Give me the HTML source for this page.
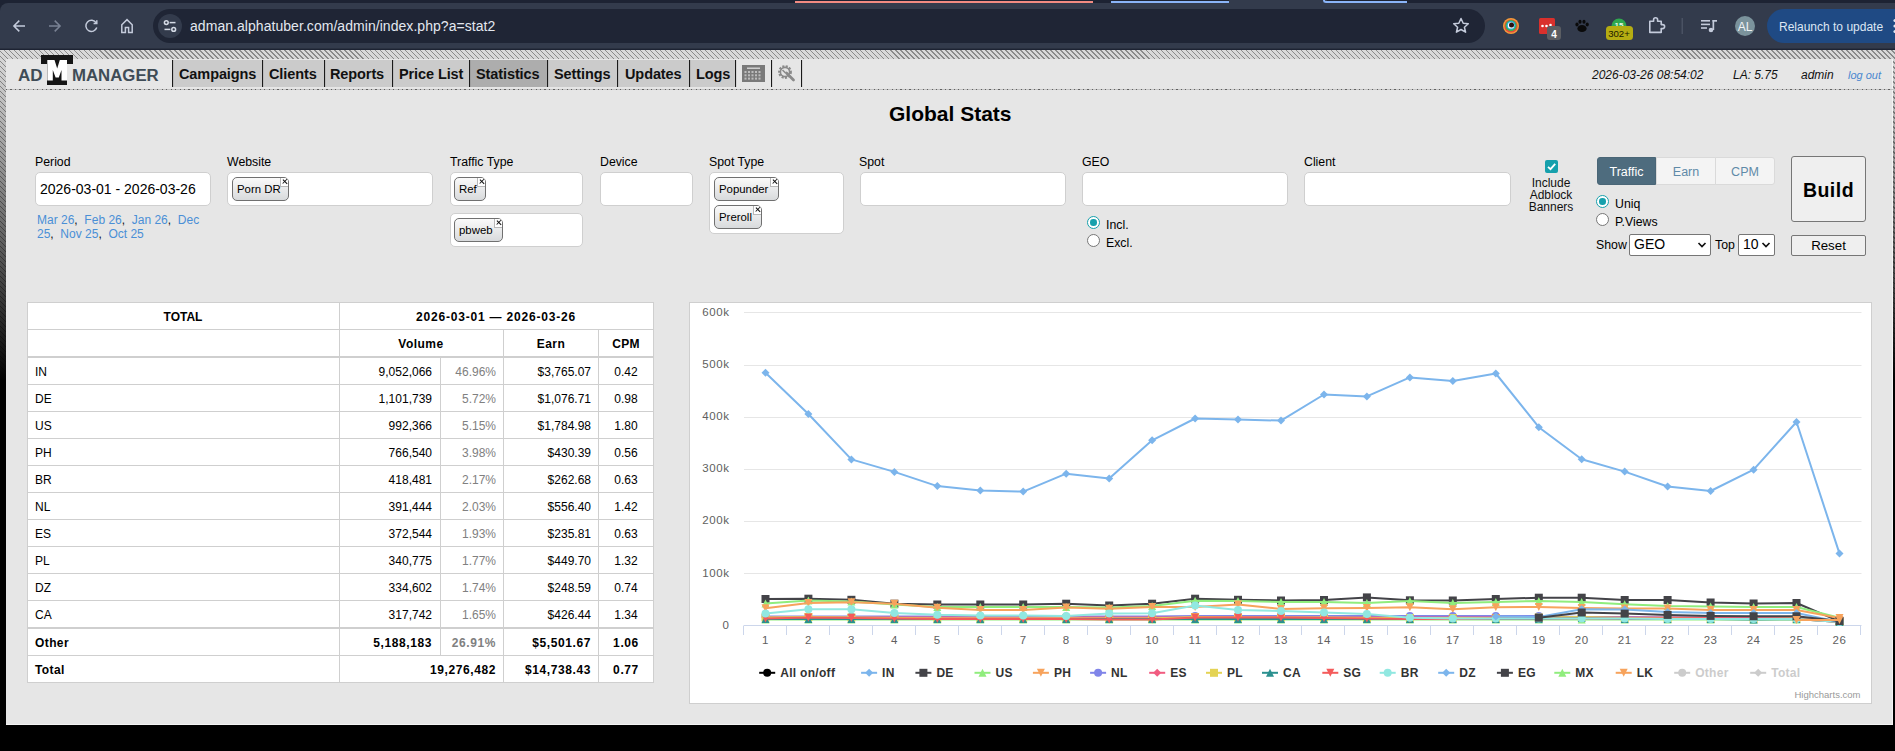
<!DOCTYPE html>
<html><head><meta charset="utf-8">
<style>
*{box-sizing:border-box;margin:0;padding:0}
html,body{width:1895px;height:751px;overflow:hidden;background:#000;font-family:"Liberation Sans",sans-serif;position:relative}
.a{position:absolute;white-space:nowrap}
/* chrome */
#chrome{position:absolute;left:0;top:0;width:1895px;height:50px;background:#1d2333}
#toolbar{position:absolute;left:0;top:3px;width:1895px;height:46px;background:#333b4c;border-radius:8px 0 0 0;border-bottom:1px solid #2a3140}
#omni{position:absolute;left:153px;top:9px;width:1332px;height:34px;border-radius:17px;background:#1f2535}
/* body bg */
#bg{position:absolute;left:0;top:50px;width:1895px;height:701px;
 background:
 repeating-linear-gradient(45deg, rgba(0,0,0,0) 0px, rgba(0,0,0,0) 2.6px, rgba(0,0,0,.36) 2.6px, rgba(0,0,0,.36) 3.54px),
 linear-gradient(#dadada 0px, #c0c0c0 50px, #606060 190px, #000 330px);}
#page{position:absolute;left:6px;top:59px;width:1887px;height:666px;background:#e6e6e6;border-bottom:1px solid #f4f4f4;border-right:1px solid #f4f4f4}
.menu{position:absolute;top:60px;height:27px;background:#cbcbcb}
.sep{position:absolute;top:60px;width:1px;height:27px;background:#1a1a1a;box-shadow:0.5px 0 0 rgba(30,30,30,.2)}
.mt{position:absolute;top:65.5px;font-size:14.5px;font-weight:bold;color:#111;letter-spacing:-0.1px;white-space:nowrap}
.lbl{position:absolute;font-size:12.3px;color:#000;white-space:nowrap}
.box{position:absolute;background:#fff;border:1px solid #cfcfcf;border-radius:5px}
.chip{position:absolute;height:24px;border:1px solid #707070;border-radius:5px;background:linear-gradient(#fafafa,#d8dadc);font-size:11.4px;color:#000;padding:5px 0 0 4px;white-space:nowrap}
.chip i{font-size:0;position:absolute;right:0px;top:0px;width:8.5px;height:8.5px;background:#fff;border-left:1px solid #b8b8b8;border-bottom:1px solid #b8b8b8;border-radius:0 4px 0 0}.chip i:before,.chip i:after{content:"";position:absolute;left:1.2px;top:3.2px;width:5.5px;height:1.4px;background:#111;transform:rotate(45deg)}.chip i:after{transform:rotate(-45deg)}
.radio{position:absolute;width:13px;height:13px;border-radius:50%;border:1px solid #777;background:#fff}
.radio.on{border:1.5px solid #16a0ac;background:#fff}
.radio.on:after{content:"";position:absolute;left:2px;top:2px;width:6.5px;height:6.5px;border-radius:50%;background:#16a0ac}
</style></head><body>
<div id="chrome">
 <div class="a" style="left:795px;top:0.5px;width:298px;height:2px;background:#f28b82"></div>
 <div class="a" style="left:1111px;top:0;width:122px;height:3px;border-bottom:2px solid #8ab4f8;border-right:2px solid #8ab4f8;border-radius:0 0 5px 0"></div>
 <div class="a" style="left:1229px;top:0;width:98px;height:3.5px;background:#333b4c"></div>
 <div class="a" style="left:1323px;top:0;width:84px;height:3px;border-bottom:2px solid #8ab4f8;border-left:2px solid #8ab4f8;border-radius:0 0 0 5px"></div>
 <div id="toolbar"></div>
 <div id="omni"></div>
 <svg class="a" style="left:0;top:0" width="1895" height="50" viewBox="0 0 1895 50">
  <g fill="none" stroke="#c4cbdb" stroke-width="1.5" stroke-linecap="butt">
   <path d="M25 26 H14.2 M19.3 20.6 L13.9 26 L19.3 31.4"/>
  </g>
  <g fill="none" stroke="#7a8294" stroke-width="1.5">
   <path d="M49 26 H59.8 M54.7 20.6 L60.1 26 L54.7 31.4"/>
  </g>
  <g fill="none" stroke="#c4cbdb" stroke-width="1.5">
   <path d="M96.2 22.8 A5.6 5.6 0 1 0 96.8 27.6"/>
   <path d="M96.8 20.2 V23.4 H93.6"/>
   <path d="M121.8 32.6 V24.8 L127 19.6 L132.2 24.8 V32.6 H128.6 V27.6 H125.4 V32.6 Z" stroke-linejoin="miter"/>
  </g>
  <circle cx="170" cy="26" r="12" fill="#333b4c"/>
  <g fill="none" stroke="#d5dbe6" stroke-width="1.5">
   <circle cx="166.3" cy="22.6" r="1.9"/><path d="M169.6 22.6 H175.5"/>
   <circle cx="173.7" cy="29.4" r="1.9"/><path d="M164.5 29.4 H170.4"/>
  </g>
  <path d="M1461 18.5 L1463.2 23.3 L1468.3 23.8 L1464.4 27.2 L1465.6 32.2 L1461 29.5 L1456.4 32.2 L1457.6 27.2 L1453.7 23.8 L1458.8 23.3 Z" fill="none" stroke="#c4cbdb" stroke-width="1.5" stroke-linejoin="round"/>
  <!-- ext 1 colorful eye -->
  <circle cx="1511" cy="26" r="8" fill="#f39c3a"/>
  <circle cx="1511" cy="26" r="6.6" fill="#e8473a"/>
  <circle cx="1511" cy="25.6" r="5.6" fill="#3eb24c"/>
  <circle cx="1511" cy="25.4" r="4.4" fill="#29a8e0"/>
  <circle cx="1511" cy="25.4" r="3.2" fill="#fff"/>
  <circle cx="1511.5" cy="25" r="2.5" fill="#2a1210"/>
  <!-- ext 2 red -->
  <rect x="1539" y="18" width="16" height="16" rx="1.5" fill="#d9302c"/>
  <circle cx="1542.5" cy="26" r="1.3" fill="#fff"/><circle cx="1546.5" cy="26" r="1.3" fill="#fff"/><circle cx="1550.5" cy="25" r="1.3" fill="#fff"/>
  <rect x="1547" y="26" width="14" height="14" rx="3" fill="#5b5e63"/>
  <text x="1554" y="37.5" font-family="Liberation Sans" font-size="10" font-weight="bold" fill="#fff" text-anchor="middle">4</text>
  <!-- paw -->
  <g fill="#0a0a0a">
   <ellipse cx="1582" cy="28.5" rx="4.6" ry="3.6"/>
   <ellipse cx="1577" cy="24.5" rx="1.6" ry="2"/><ellipse cx="1580" cy="21.8" rx="1.6" ry="2"/>
   <ellipse cx="1584" cy="21.8" rx="1.6" ry="2"/><ellipse cx="1587.2" cy="24.5" rx="1.6" ry="2"/>
  </g>
  <!-- ext green with 302+ -->
  <circle cx="1619" cy="26" r="7.5" fill="#2fa84f"/><text x="1619" y="28" font-family="Liberation Sans" font-size="8" font-weight="bold" fill="#e8f5e8" text-anchor="middle">15</text>
  <rect x="1606" y="26" width="27" height="14" rx="3.5" fill="#b5ad12"/>
  <text x="1619" y="37" font-family="Liberation Sans" font-size="9.6" fill="#1a1a00" text-anchor="middle">302+</text>
  <!-- puzzle -->
  <path d="M1649.8 21.2 H1653.6 V19.8 A2 2 0 0 1 1657.6 19.8 V21.2 H1661.2 V24.6 H1662.6 A2 2 0 0 1 1662.6 28.6 H1661.2 V32.4 H1649.8 Z" fill="none" stroke="#c4cbdb" stroke-width="1.6" stroke-linejoin="round"/>
  <rect x="1681.5" y="18" width="1.5" height="16" fill="#4a5263"/>
  <!-- media -->
  <g fill="#c4cbdb">
   <rect x="1701" y="20" width="9" height="1.6"/><rect x="1701" y="23.6" width="9" height="1.6"/><rect x="1701" y="27.2" width="6" height="1.6"/>
   <rect x="1712.5" y="20" width="1.7" height="10"/><rect x="1712.5" y="20" width="4.5" height="1.7"/>
   <circle cx="1711" cy="30" r="2.3"/>
  </g>
  <circle cx="1745" cy="26" r="10" fill="#7b939c"/>
  <text x="1745" y="30.5" font-family="Liberation Sans" font-size="12" fill="#f0f4f6" text-anchor="middle">AL</text>
  <rect x="1767" y="9" width="160" height="34" rx="17" fill="#1f4a84"/>
  <text x="1779" y="30.5" font-family="Liberation Sans" font-size="12" fill="#dde6f3">Relaunch to update</text>
  <circle cx="1895" cy="20.5" r="1.6" fill="#dde6f3"/><circle cx="1895" cy="26" r="1.6" fill="#dde6f3"/><circle cx="1895" cy="31.5" r="1.6" fill="#dde6f3"/>
 </svg>
 <div class="a" style="left:190px;top:18px;font-size:14px;color:#e3e8f0;letter-spacing:0.05px">adman.alphatuber.com/admin/index.php?a=stat2</div>
</div>
<div id="bg"></div>
<div id="page"></div>
<!-- logo -->
<div class="a" style="left:18px;top:66px;font-size:17px;font-weight:bold;color:#3f4c56">AD</div>
<div class="a" style="left:41px;top:55px;width:32px;height:9px;background:#151515"></div>
<div class="a" style="left:47px;top:55px;width:20px;height:30px;background:#151515"></div>
<svg class="a" style="left:41px;top:55px" width="32" height="30" viewBox="0 0 32 30"><path d="M6.3 25.5 V5 H13.5 L16.2 13.5 L18.8 5 H26 V25.5 H20.5 V15 L17.8 22.5 H14.6 L11.8 15 V25.5 Z" fill="#fff"/></svg>
<div class="a" style="left:72px;top:66px;font-size:16.8px;font-weight:bold;color:#3f4c56">MANAGER</div>
<!-- menu -->
<div class="menu" style="left:173px;width:563px"></div>
<div class="menu" style="left:470px;width:78px;background:#adadad"></div>
<div class="sep" style="left:172px"></div>
<div class="sep" style="left:262px"></div>
<div class="sep" style="left:324px"></div>
<div class="sep" style="left:392px"></div>
<div class="sep" style="left:469px"></div>
<div class="sep" style="left:547px"></div>
<div class="sep" style="left:617px"></div>
<div class="sep" style="left:689px"></div>
<div class="sep" style="left:735px"></div>
<div class="sep" style="left:771px"></div>
<div class="sep" style="left:801px"></div>
<div class="mt" style="left:179px">Campaigns</div>
<div class="mt" style="left:269px">Clients</div>
<div class="mt" style="left:330px">Reports</div>
<div class="mt" style="left:399px">Price List</div>
<div class="mt" style="left:476px">Statistics</div>
<div class="mt" style="left:554px">Settings</div>
<div class="mt" style="left:625px">Updates</div>
<div class="mt" style="left:696px">Logs</div>
<svg class="a" style="left:742px;top:65px" width="23" height="17" viewBox="0 0 23 17">
 <rect x="0" y="0" width="23" height="17" fill="#7a7a7a"/>
 <rect x="5" y="2.5" width="13" height="1.5" fill="#cfcfcf"/>
 <g fill="#bdbdbd">
  <rect x="2.5" y="6" width="2" height="2"/><rect x="6" y="6" width="2" height="2"/><rect x="9.5" y="6" width="2" height="2"/><rect x="13" y="6" width="2" height="2"/><rect x="16.5" y="6" width="2" height="2"/>
  <rect x="2.5" y="9.3" width="2" height="2"/><rect x="6" y="9.3" width="2" height="2"/><rect x="9.5" y="9.3" width="2" height="2"/><rect x="13" y="9.3" width="2" height="2"/><rect x="16.5" y="9.3" width="2" height="2"/>
  <rect x="2.5" y="12.6" width="2" height="2"/><rect x="6" y="12.6" width="2" height="2"/><rect x="9.5" y="12.6" width="2" height="2"/><rect x="13" y="12.6" width="2" height="2"/><rect x="16.5" y="12.6" width="2" height="2"/>
 </g>
</svg>
<svg class="a" style="left:777px;top:64px" width="20" height="19" viewBox="0 0 20 19">
 <circle cx="8" cy="8" r="5.6" fill="none" stroke="#8a8a8a" stroke-width="2.6" stroke-dasharray="2 1.3"/>
 <circle cx="8" cy="8" r="4.6" fill="none" stroke="#8a8a8a" stroke-width="1.6"/>
 <path d="M9.5 9 L16.5 16" stroke="#8a8a8a" stroke-width="2.8" stroke-linecap="round"/>
 <path d="M5.5 6 L8.5 9" stroke="#8a8a8a" stroke-width="1.6"/>
</svg>
<div class="a" style="left:6px;top:89px;width:1887px;height:1px;background:repeating-linear-gradient(90deg,#606060 0,#606060 1.2px,#c2c2c2 1.2px,#c2c2c2 4.45px)"></div>
<div class="a" style="left:1592px;top:68px;font-size:12px;font-style:italic;color:#111">2026-03-26 08:54:02</div>
<div class="a" style="left:1733px;top:68px;font-size:12px;font-style:italic;color:#111">LA: 5.75</div>
<div class="a" style="left:1801px;top:68px;font-size:12px;font-style:italic;color:#111">admin</div>
<div class="a" style="left:1848px;top:69px;font-size:11px;font-style:italic;color:#4a87cf">log out</div>
<!-- title -->
<div class="a" style="left:889px;top:102px;font-size:21px;font-weight:bold;color:#000">Global Stats</div>
<!-- form -->
<div class="lbl" style="left:35px;top:155px">Period</div>
<div class="box" style="left:35px;top:172px;width:176px;height:34px"></div>
<div class="a" style="left:40px;top:181px;font-size:14px;color:#000">2026-03-01 - 2026-03-26</div>
<div class="a" style="left:37px;top:213px;font-size:12px;line-height:14px;color:#4a8fd6">Mar 26<span style="color:#111">,</span>&nbsp;&nbsp;Feb 26<span style="color:#111">,</span>&nbsp;&nbsp;Jan 26<span style="color:#111">,</span>&nbsp;&nbsp;Dec<br>25<span style="color:#111">,</span>&nbsp;&nbsp;Nov 25<span style="color:#111">,</span>&nbsp;&nbsp;Oct 25</div>

<div class="lbl" style="left:227px;top:155px">Website</div>
<div class="box" style="left:227px;top:172px;width:206px;height:34px"></div>
<div class="chip" style="left:232px;top:177px;width:57px">Porn DR<i>x</i></div>

<div class="lbl" style="left:450px;top:155px">Traffic Type</div>
<div class="box" style="left:450px;top:172px;width:133px;height:34px"></div>
<div class="chip" style="left:454px;top:177px;width:32px">Ref<i>x</i></div>
<div class="box" style="left:450px;top:213px;width:133px;height:34px"></div>
<div class="chip" style="left:454px;top:218px;width:49px">pbweb<i>x</i></div>

<div class="lbl" style="left:600px;top:155px">Device</div>
<div class="box" style="left:600px;top:172px;width:93px;height:34px"></div>

<div class="lbl" style="left:709px;top:155px">Spot Type</div>
<div class="box" style="left:709px;top:172px;width:135px;height:62px"></div>
<div class="chip" style="left:714px;top:177px;width:65px">Popunder<i>x</i></div>
<div class="chip" style="left:714px;top:205px;width:48px">Preroll<i>x</i></div>

<div class="lbl" style="left:859px;top:155px">Spot</div>
<div class="box" style="left:860px;top:172px;width:206px;height:34px"></div>

<div class="lbl" style="left:1082px;top:155px">GEO</div>
<div class="box" style="left:1082px;top:172px;width:206px;height:34px"></div>
<div class="radio on" style="left:1087px;top:216px"></div>
<div class="lbl" style="left:1106px;top:218px">Incl.</div>
<div class="radio" style="left:1087px;top:234px"></div>
<div class="lbl" style="left:1106px;top:236px">Excl.</div>

<div class="lbl" style="left:1304px;top:155px">Client</div>
<div class="box" style="left:1304px;top:172px;width:207px;height:34px"></div>

<div class="a" style="left:1545px;top:160px;width:13px;height:13px;border-radius:2px;background:#16a0ac"></div>
<svg class="a" style="left:1545px;top:160px" width="13" height="13" viewBox="0 0 13 13"><path d="M3 6.8 L5.5 9.2 L10.2 3.8" fill="none" stroke="#fff" stroke-width="1.8"/></svg>
<div class="a" style="left:1518px;top:177px;width:66px;text-align:center;font-size:12px;line-height:12px;color:#111">Include<br>Adblock<br>Banners</div>

<div class="a" style="left:1597px;top:157px;width:59px;height:28px;background:#4e6c7e;border:1px solid #4a6677;border-radius:3px 0 0 3px;color:#fff;font-size:12.5px;text-align:center;line-height:28.5px">Traffic</div>
<div class="a" style="left:1656px;top:157px;width:60px;height:28px;background:#f4f4f4;border:1px solid #dadada;color:#5f8aa8;font-size:12.5px;text-align:center;line-height:28.5px">Earn</div>
<div class="a" style="left:1715px;top:157px;width:60px;height:28px;background:#f4f4f4;border:1px solid #dadada;border-radius:0 3px 3px 0;color:#5f8aa8;font-size:12.5px;text-align:center;line-height:28.5px">CPM</div>

<div class="radio on" style="left:1596px;top:195px"></div>
<div class="lbl" style="left:1615px;top:197px">Uniq</div>
<div class="radio" style="left:1596px;top:213px"></div>
<div class="lbl" style="left:1615px;top:215px">P.Views</div>

<div class="lbl" style="left:1596px;top:238px">Show</div>
<div class="a" style="left:1629px;top:234px;width:82px;height:22px;background:#fff;border:1px solid #767676;border-radius:2px"></div>
<div class="a" style="left:1634px;top:236px;font-size:14px;color:#000">GEO</div>
<svg class="a" style="left:1697px;top:241px" width="10" height="8" viewBox="0 0 10 8"><path d="M1.5 2 L5 5.5 L8.5 2" fill="none" stroke="#111" stroke-width="1.7"/></svg>
<div class="lbl" style="left:1715px;top:238px">Top</div>
<div class="a" style="left:1738px;top:234px;width:37px;height:22px;background:#fff;border:1px solid #767676;border-radius:2px"></div>
<div class="a" style="left:1743px;top:236px;font-size:14px;color:#000">10</div>
<svg class="a" style="left:1761px;top:241px" width="10" height="8" viewBox="0 0 10 8"><path d="M1.5 2 L5 5.5 L8.5 2" fill="none" stroke="#111" stroke-width="1.7"/></svg>

<div class="a" style="left:1791px;top:156px;width:75px;height:66px;background:#efefef;border:1px solid #767676;border-radius:3px;font-size:19.5px;font-weight:bold;color:#000;text-align:center;line-height:66px;letter-spacing:0.5px">Build</div>
<div id="chart"><div class="a" style="left:689px;top:302px;width:1183px;height:402px;background:#fff;border:1px solid #cfcfcf"></div>
<svg class="a" style="left:0;top:0" width="1895" height="751" viewBox="0 0 1895 751">
<path d="M744.0 573.5 H1861.5" stroke="#e6e6e6" stroke-width="1"/>
<path d="M744.0 521.5 H1861.5" stroke="#e6e6e6" stroke-width="1"/>
<path d="M744.0 469.5 H1861.5" stroke="#e6e6e6" stroke-width="1"/>
<path d="M744.0 417.5 H1861.5" stroke="#e6e6e6" stroke-width="1"/>
<path d="M744.0 365.5 H1861.5" stroke="#e6e6e6" stroke-width="1"/>
<path d="M744.0 312.5 H1861.5" stroke="#e6e6e6" stroke-width="1"/>
<path d="M744.0 625.5 H1861.5" stroke="#ccd6eb" stroke-width="1"/>
<path d="M743.5 625.5 V635" stroke="#ccd6eb" stroke-width="1"/>
<path d="M786.5 625.5 V635" stroke="#ccd6eb" stroke-width="1"/>
<path d="M829.5 625.5 V635" stroke="#ccd6eb" stroke-width="1"/>
<path d="M872.5 625.5 V635" stroke="#ccd6eb" stroke-width="1"/>
<path d="M915.5 625.5 V635" stroke="#ccd6eb" stroke-width="1"/>
<path d="M958.5 625.5 V635" stroke="#ccd6eb" stroke-width="1"/>
<path d="M1001.5 625.5 V635" stroke="#ccd6eb" stroke-width="1"/>
<path d="M1044.5 625.5 V635" stroke="#ccd6eb" stroke-width="1"/>
<path d="M1087.5 625.5 V635" stroke="#ccd6eb" stroke-width="1"/>
<path d="M1130.5 625.5 V635" stroke="#ccd6eb" stroke-width="1"/>
<path d="M1173.5 625.5 V635" stroke="#ccd6eb" stroke-width="1"/>
<path d="M1216.5 625.5 V635" stroke="#ccd6eb" stroke-width="1"/>
<path d="M1259.5 625.5 V635" stroke="#ccd6eb" stroke-width="1"/>
<path d="M1301.5 625.5 V635" stroke="#ccd6eb" stroke-width="1"/>
<path d="M1344.5 625.5 V635" stroke="#ccd6eb" stroke-width="1"/>
<path d="M1387.5 625.5 V635" stroke="#ccd6eb" stroke-width="1"/>
<path d="M1430.5 625.5 V635" stroke="#ccd6eb" stroke-width="1"/>
<path d="M1473.5 625.5 V635" stroke="#ccd6eb" stroke-width="1"/>
<path d="M1516.5 625.5 V635" stroke="#ccd6eb" stroke-width="1"/>
<path d="M1559.5 625.5 V635" stroke="#ccd6eb" stroke-width="1"/>
<path d="M1602.5 625.5 V635" stroke="#ccd6eb" stroke-width="1"/>
<path d="M1645.5 625.5 V635" stroke="#ccd6eb" stroke-width="1"/>
<path d="M1688.5 625.5 V635" stroke="#ccd6eb" stroke-width="1"/>
<path d="M1731.5 625.5 V635" stroke="#ccd6eb" stroke-width="1"/>
<path d="M1774.5 625.5 V635" stroke="#ccd6eb" stroke-width="1"/>
<path d="M1817.5 625.5 V635" stroke="#ccd6eb" stroke-width="1"/>
<path d="M1860.5 625.5 V635" stroke="#ccd6eb" stroke-width="1"/>
<text x="729.5" y="628.7" text-anchor="end" font-family="Liberation Sans" font-size="11.5" fill="#606060" letter-spacing="0.6">0</text>
<text x="729.5" y="576.5" text-anchor="end" font-family="Liberation Sans" font-size="11.5" fill="#606060" letter-spacing="0.6">100k</text>
<text x="729.5" y="524.4" text-anchor="end" font-family="Liberation Sans" font-size="11.5" fill="#606060" letter-spacing="0.6">200k</text>
<text x="729.5" y="472.2" text-anchor="end" font-family="Liberation Sans" font-size="11.5" fill="#606060" letter-spacing="0.6">300k</text>
<text x="729.5" y="420.0" text-anchor="end" font-family="Liberation Sans" font-size="11.5" fill="#606060" letter-spacing="0.6">400k</text>
<text x="729.5" y="367.8" text-anchor="end" font-family="Liberation Sans" font-size="11.5" fill="#606060" letter-spacing="0.6">500k</text>
<text x="729.5" y="315.7" text-anchor="end" font-family="Liberation Sans" font-size="11.5" fill="#606060" letter-spacing="0.6">600k</text>
<text x="765.5" y="644" text-anchor="middle" font-family="Liberation Sans" font-size="11.5" fill="#606060" letter-spacing="0.5">1</text>
<text x="808.4" y="644" text-anchor="middle" font-family="Liberation Sans" font-size="11.5" fill="#606060" letter-spacing="0.5">2</text>
<text x="851.4" y="644" text-anchor="middle" font-family="Liberation Sans" font-size="11.5" fill="#606060" letter-spacing="0.5">3</text>
<text x="894.4" y="644" text-anchor="middle" font-family="Liberation Sans" font-size="11.5" fill="#606060" letter-spacing="0.5">4</text>
<text x="937.3" y="644" text-anchor="middle" font-family="Liberation Sans" font-size="11.5" fill="#606060" letter-spacing="0.5">5</text>
<text x="980.3" y="644" text-anchor="middle" font-family="Liberation Sans" font-size="11.5" fill="#606060" letter-spacing="0.5">6</text>
<text x="1023.2" y="644" text-anchor="middle" font-family="Liberation Sans" font-size="11.5" fill="#606060" letter-spacing="0.5">7</text>
<text x="1066.2" y="644" text-anchor="middle" font-family="Liberation Sans" font-size="11.5" fill="#606060" letter-spacing="0.5">8</text>
<text x="1109.2" y="644" text-anchor="middle" font-family="Liberation Sans" font-size="11.5" fill="#606060" letter-spacing="0.5">9</text>
<text x="1152.1" y="644" text-anchor="middle" font-family="Liberation Sans" font-size="11.5" fill="#606060" letter-spacing="0.5">10</text>
<text x="1195.1" y="644" text-anchor="middle" font-family="Liberation Sans" font-size="11.5" fill="#606060" letter-spacing="0.5">11</text>
<text x="1238.0" y="644" text-anchor="middle" font-family="Liberation Sans" font-size="11.5" fill="#606060" letter-spacing="0.5">12</text>
<text x="1281.0" y="644" text-anchor="middle" font-family="Liberation Sans" font-size="11.5" fill="#606060" letter-spacing="0.5">13</text>
<text x="1324.0" y="644" text-anchor="middle" font-family="Liberation Sans" font-size="11.5" fill="#606060" letter-spacing="0.5">14</text>
<text x="1366.9" y="644" text-anchor="middle" font-family="Liberation Sans" font-size="11.5" fill="#606060" letter-spacing="0.5">15</text>
<text x="1409.9" y="644" text-anchor="middle" font-family="Liberation Sans" font-size="11.5" fill="#606060" letter-spacing="0.5">16</text>
<text x="1452.8" y="644" text-anchor="middle" font-family="Liberation Sans" font-size="11.5" fill="#606060" letter-spacing="0.5">17</text>
<text x="1495.8" y="644" text-anchor="middle" font-family="Liberation Sans" font-size="11.5" fill="#606060" letter-spacing="0.5">18</text>
<text x="1538.8" y="644" text-anchor="middle" font-family="Liberation Sans" font-size="11.5" fill="#606060" letter-spacing="0.5">19</text>
<text x="1581.7" y="644" text-anchor="middle" font-family="Liberation Sans" font-size="11.5" fill="#606060" letter-spacing="0.5">20</text>
<text x="1624.7" y="644" text-anchor="middle" font-family="Liberation Sans" font-size="11.5" fill="#606060" letter-spacing="0.5">21</text>
<text x="1667.6" y="644" text-anchor="middle" font-family="Liberation Sans" font-size="11.5" fill="#606060" letter-spacing="0.5">22</text>
<text x="1710.6" y="644" text-anchor="middle" font-family="Liberation Sans" font-size="11.5" fill="#606060" letter-spacing="0.5">23</text>
<text x="1753.6" y="644" text-anchor="middle" font-family="Liberation Sans" font-size="11.5" fill="#606060" letter-spacing="0.5">24</text>
<text x="1796.5" y="644" text-anchor="middle" font-family="Liberation Sans" font-size="11.5" fill="#606060" letter-spacing="0.5">25</text>
<text x="1839.5" y="644" text-anchor="middle" font-family="Liberation Sans" font-size="11.5" fill="#606060" letter-spacing="0.5">26</text>
<path d="M765.5 372.8 L808.4 414.0 L851.4 459.4 L894.4 471.9 L937.3 486.1 L980.3 490.5 L1023.2 491.6 L1066.2 473.7 L1109.2 478.4 L1152.1 440.3 L1195.1 418.5 L1238.0 419.6 L1281.0 420.6 L1324.0 394.5 L1366.9 396.4 L1409.9 377.4 L1452.8 380.9 L1495.8 373.5 L1538.8 427.2 L1581.7 459.3 L1624.7 471.6 L1667.6 486.5 L1710.6 491.0 L1753.6 469.7 L1796.5 422.0 L1839.5 553.6" fill="none" stroke="#7cb5ec" stroke-width="2" stroke-linejoin="round" stroke-linecap="round"/>
<path d="M765.5 368.8 L769.5 372.8 L765.5 376.8 L761.5 372.8 Z" fill="#7cb5ec"/>
<path d="M808.4 410.0 L812.4 414.0 L808.4 418.0 L804.4 414.0 Z" fill="#7cb5ec"/>
<path d="M851.4 455.4 L855.4 459.4 L851.4 463.4 L847.4 459.4 Z" fill="#7cb5ec"/>
<path d="M894.4 467.9 L898.4 471.9 L894.4 475.9 L890.4 471.9 Z" fill="#7cb5ec"/>
<path d="M937.3 482.1 L941.3 486.1 L937.3 490.1 L933.3 486.1 Z" fill="#7cb5ec"/>
<path d="M980.3 486.5 L984.3 490.5 L980.3 494.5 L976.3 490.5 Z" fill="#7cb5ec"/>
<path d="M1023.2 487.6 L1027.2 491.6 L1023.2 495.6 L1019.2 491.6 Z" fill="#7cb5ec"/>
<path d="M1066.2 469.7 L1070.2 473.7 L1066.2 477.7 L1062.2 473.7 Z" fill="#7cb5ec"/>
<path d="M1109.2 474.4 L1113.2 478.4 L1109.2 482.4 L1105.2 478.4 Z" fill="#7cb5ec"/>
<path d="M1152.1 436.3 L1156.1 440.3 L1152.1 444.3 L1148.1 440.3 Z" fill="#7cb5ec"/>
<path d="M1195.1 414.5 L1199.1 418.5 L1195.1 422.5 L1191.1 418.5 Z" fill="#7cb5ec"/>
<path d="M1238.0 415.6 L1242.0 419.6 L1238.0 423.6 L1234.0 419.6 Z" fill="#7cb5ec"/>
<path d="M1281.0 416.6 L1285.0 420.6 L1281.0 424.6 L1277.0 420.6 Z" fill="#7cb5ec"/>
<path d="M1324.0 390.5 L1328.0 394.5 L1324.0 398.5 L1320.0 394.5 Z" fill="#7cb5ec"/>
<path d="M1366.9 392.4 L1370.9 396.4 L1366.9 400.4 L1362.9 396.4 Z" fill="#7cb5ec"/>
<path d="M1409.9 373.4 L1413.9 377.4 L1409.9 381.4 L1405.9 377.4 Z" fill="#7cb5ec"/>
<path d="M1452.8 376.9 L1456.8 380.9 L1452.8 384.9 L1448.8 380.9 Z" fill="#7cb5ec"/>
<path d="M1495.8 369.5 L1499.8 373.5 L1495.8 377.5 L1491.8 373.5 Z" fill="#7cb5ec"/>
<path d="M1538.8 423.2 L1542.8 427.2 L1538.8 431.2 L1534.8 427.2 Z" fill="#7cb5ec"/>
<path d="M1581.7 455.3 L1585.7 459.3 L1581.7 463.3 L1577.7 459.3 Z" fill="#7cb5ec"/>
<path d="M1624.7 467.6 L1628.7 471.6 L1624.7 475.6 L1620.7 471.6 Z" fill="#7cb5ec"/>
<path d="M1667.6 482.5 L1671.6 486.5 L1667.6 490.5 L1663.6 486.5 Z" fill="#7cb5ec"/>
<path d="M1710.6 487.0 L1714.6 491.0 L1710.6 495.0 L1706.6 491.0 Z" fill="#7cb5ec"/>
<path d="M1753.6 465.7 L1757.6 469.7 L1753.6 473.7 L1749.6 469.7 Z" fill="#7cb5ec"/>
<path d="M1796.5 418.0 L1800.5 422.0 L1796.5 426.0 L1792.5 422.0 Z" fill="#7cb5ec"/>
<path d="M1839.5 549.6 L1843.5 553.6 L1839.5 557.6 L1835.5 553.6 Z" fill="#7cb5ec"/>
<path d="M765.5 599.0 L808.4 598.7 L851.4 599.8 L894.4 603.7 L937.3 604.5 L980.3 604.5 L1023.2 604.5 L1066.2 603.7 L1109.2 605.5 L1152.1 603.7 L1195.1 598.7 L1238.0 599.8 L1281.0 600.5 L1324.0 600.0 L1366.9 597.4 L1409.9 600.3 L1452.8 600.5 L1495.8 599.0 L1538.8 597.7 L1581.7 597.7 L1624.7 600.0 L1667.6 600.0 L1710.6 602.5 L1753.6 603.5 L1796.5 603.0 L1839.5 621.3" fill="none" stroke="#434348" stroke-width="2" stroke-linejoin="round" stroke-linecap="round"/>
<rect x="761.5" y="595.0" width="8" height="8" fill="#434348"/>
<rect x="804.4" y="594.7" width="8" height="8" fill="#434348"/>
<rect x="847.4" y="595.8" width="8" height="8" fill="#434348"/>
<rect x="890.4" y="599.7" width="8" height="8" fill="#434348"/>
<rect x="933.3" y="600.5" width="8" height="8" fill="#434348"/>
<rect x="976.3" y="600.5" width="8" height="8" fill="#434348"/>
<rect x="1019.2" y="600.5" width="8" height="8" fill="#434348"/>
<rect x="1062.2" y="599.7" width="8" height="8" fill="#434348"/>
<rect x="1105.2" y="601.5" width="8" height="8" fill="#434348"/>
<rect x="1148.1" y="599.7" width="8" height="8" fill="#434348"/>
<rect x="1191.1" y="594.7" width="8" height="8" fill="#434348"/>
<rect x="1234.0" y="595.8" width="8" height="8" fill="#434348"/>
<rect x="1277.0" y="596.5" width="8" height="8" fill="#434348"/>
<rect x="1320.0" y="596.0" width="8" height="8" fill="#434348"/>
<rect x="1362.9" y="593.4" width="8" height="8" fill="#434348"/>
<rect x="1405.9" y="596.3" width="8" height="8" fill="#434348"/>
<rect x="1448.8" y="596.5" width="8" height="8" fill="#434348"/>
<rect x="1491.8" y="595.0" width="8" height="8" fill="#434348"/>
<rect x="1534.8" y="593.7" width="8" height="8" fill="#434348"/>
<rect x="1577.7" y="593.7" width="8" height="8" fill="#434348"/>
<rect x="1620.7" y="596.0" width="8" height="8" fill="#434348"/>
<rect x="1663.6" y="596.0" width="8" height="8" fill="#434348"/>
<rect x="1706.6" y="598.5" width="8" height="8" fill="#434348"/>
<rect x="1749.6" y="599.5" width="8" height="8" fill="#434348"/>
<rect x="1792.5" y="599.0" width="8" height="8" fill="#434348"/>
<rect x="1835.5" y="617.3" width="8" height="8" fill="#434348"/>
<path d="M765.5 603.4 L808.4 600.5 L851.4 601.5 L894.4 604.5 L937.3 607.0 L980.3 607.0 L1023.2 607.0 L1066.2 607.0 L1109.2 607.4 L1152.1 606.0 L1195.1 600.8 L1238.0 601.0 L1281.0 602.0 L1324.0 602.0 L1366.9 603.0 L1409.9 601.0 L1452.8 603.0 L1495.8 602.0 L1538.8 601.0 L1581.7 602.0 L1624.7 604.2 L1667.6 606.0 L1710.6 606.4 L1753.6 607.0 L1796.5 607.0 L1839.5 617.7" fill="none" stroke="#90ed7d" stroke-width="2" stroke-linejoin="round" stroke-linecap="round"/>
<path d="M765.5 599.4 L769.5 607.4 L761.5 607.4 Z" fill="#90ed7d"/>
<path d="M808.4 596.5 L812.4 604.5 L804.4 604.5 Z" fill="#90ed7d"/>
<path d="M851.4 597.5 L855.4 605.5 L847.4 605.5 Z" fill="#90ed7d"/>
<path d="M894.4 600.5 L898.4 608.5 L890.4 608.5 Z" fill="#90ed7d"/>
<path d="M937.3 603.0 L941.3 611.0 L933.3 611.0 Z" fill="#90ed7d"/>
<path d="M980.3 603.0 L984.3 611.0 L976.3 611.0 Z" fill="#90ed7d"/>
<path d="M1023.2 603.0 L1027.2 611.0 L1019.2 611.0 Z" fill="#90ed7d"/>
<path d="M1066.2 603.0 L1070.2 611.0 L1062.2 611.0 Z" fill="#90ed7d"/>
<path d="M1109.2 603.4 L1113.2 611.4 L1105.2 611.4 Z" fill="#90ed7d"/>
<path d="M1152.1 602.0 L1156.1 610.0 L1148.1 610.0 Z" fill="#90ed7d"/>
<path d="M1195.1 596.8 L1199.1 604.8 L1191.1 604.8 Z" fill="#90ed7d"/>
<path d="M1238.0 597.0 L1242.0 605.0 L1234.0 605.0 Z" fill="#90ed7d"/>
<path d="M1281.0 598.0 L1285.0 606.0 L1277.0 606.0 Z" fill="#90ed7d"/>
<path d="M1324.0 598.0 L1328.0 606.0 L1320.0 606.0 Z" fill="#90ed7d"/>
<path d="M1366.9 599.0 L1370.9 607.0 L1362.9 607.0 Z" fill="#90ed7d"/>
<path d="M1409.9 597.0 L1413.9 605.0 L1405.9 605.0 Z" fill="#90ed7d"/>
<path d="M1452.8 599.0 L1456.8 607.0 L1448.8 607.0 Z" fill="#90ed7d"/>
<path d="M1495.8 598.0 L1499.8 606.0 L1491.8 606.0 Z" fill="#90ed7d"/>
<path d="M1538.8 597.0 L1542.8 605.0 L1534.8 605.0 Z" fill="#90ed7d"/>
<path d="M1581.7 598.0 L1585.7 606.0 L1577.7 606.0 Z" fill="#90ed7d"/>
<path d="M1624.7 600.2 L1628.7 608.2 L1620.7 608.2 Z" fill="#90ed7d"/>
<path d="M1667.6 602.0 L1671.6 610.0 L1663.6 610.0 Z" fill="#90ed7d"/>
<path d="M1710.6 602.4 L1714.6 610.4 L1706.6 610.4 Z" fill="#90ed7d"/>
<path d="M1753.6 603.0 L1757.6 611.0 L1749.6 611.0 Z" fill="#90ed7d"/>
<path d="M1796.5 603.0 L1800.5 611.0 L1792.5 611.0 Z" fill="#90ed7d"/>
<path d="M1839.5 613.7 L1843.5 621.7 L1835.5 621.7 Z" fill="#90ed7d"/>
<path d="M765.5 608.2 L808.4 603.0 L851.4 602.2 L894.4 603.7 L937.3 607.7 L980.3 610.0 L1023.2 610.0 L1066.2 607.5 L1109.2 608.7 L1152.1 607.0 L1195.1 607.0 L1238.0 604.5 L1281.0 609.0 L1324.0 608.2 L1366.9 608.0 L1409.9 607.2 L1452.8 609.3 L1495.8 607.2 L1538.8 607.0 L1581.7 608.0 L1624.7 608.5 L1667.6 608.5 L1710.6 610.0 L1753.6 610.0 L1796.5 610.0 L1839.5 618.0" fill="none" stroke="#f7a35c" stroke-width="2" stroke-linejoin="round" stroke-linecap="round"/>
<path d="M761.5 604.2 L769.5 604.2 L765.5 612.2 Z" fill="#f7a35c"/>
<path d="M804.4 599.0 L812.4 599.0 L808.4 607.0 Z" fill="#f7a35c"/>
<path d="M847.4 598.2 L855.4 598.2 L851.4 606.2 Z" fill="#f7a35c"/>
<path d="M890.4 599.7 L898.4 599.7 L894.4 607.7 Z" fill="#f7a35c"/>
<path d="M933.3 603.7 L941.3 603.7 L937.3 611.7 Z" fill="#f7a35c"/>
<path d="M976.3 606.0 L984.3 606.0 L980.3 614.0 Z" fill="#f7a35c"/>
<path d="M1019.2 606.0 L1027.2 606.0 L1023.2 614.0 Z" fill="#f7a35c"/>
<path d="M1062.2 603.5 L1070.2 603.5 L1066.2 611.5 Z" fill="#f7a35c"/>
<path d="M1105.2 604.7 L1113.2 604.7 L1109.2 612.7 Z" fill="#f7a35c"/>
<path d="M1148.1 603.0 L1156.1 603.0 L1152.1 611.0 Z" fill="#f7a35c"/>
<path d="M1191.1 603.0 L1199.1 603.0 L1195.1 611.0 Z" fill="#f7a35c"/>
<path d="M1234.0 600.5 L1242.0 600.5 L1238.0 608.5 Z" fill="#f7a35c"/>
<path d="M1277.0 605.0 L1285.0 605.0 L1281.0 613.0 Z" fill="#f7a35c"/>
<path d="M1320.0 604.2 L1328.0 604.2 L1324.0 612.2 Z" fill="#f7a35c"/>
<path d="M1362.9 604.0 L1370.9 604.0 L1366.9 612.0 Z" fill="#f7a35c"/>
<path d="M1405.9 603.2 L1413.9 603.2 L1409.9 611.2 Z" fill="#f7a35c"/>
<path d="M1448.8 605.3 L1456.8 605.3 L1452.8 613.3 Z" fill="#f7a35c"/>
<path d="M1491.8 603.2 L1499.8 603.2 L1495.8 611.2 Z" fill="#f7a35c"/>
<path d="M1534.8 603.0 L1542.8 603.0 L1538.8 611.0 Z" fill="#f7a35c"/>
<path d="M1577.7 604.0 L1585.7 604.0 L1581.7 612.0 Z" fill="#f7a35c"/>
<path d="M1620.7 604.5 L1628.7 604.5 L1624.7 612.5 Z" fill="#f7a35c"/>
<path d="M1663.6 604.5 L1671.6 604.5 L1667.6 612.5 Z" fill="#f7a35c"/>
<path d="M1706.6 606.0 L1714.6 606.0 L1710.6 614.0 Z" fill="#f7a35c"/>
<path d="M1749.6 606.0 L1757.6 606.0 L1753.6 614.0 Z" fill="#f7a35c"/>
<path d="M1792.5 606.0 L1800.5 606.0 L1796.5 614.0 Z" fill="#f7a35c"/>
<path d="M1835.5 614.0 L1843.5 614.0 L1839.5 622.0 Z" fill="#f7a35c"/>
<path d="M765.5 619.5 L808.4 619.5 L851.4 619.5 L894.4 619.5 L937.3 619.5 L980.3 619.5 L1023.2 619.5 L1066.2 619.5 L1109.2 619.5 L1152.1 619.5 L1195.1 619.5 L1238.0 619.5 L1281.0 619.5 L1324.0 619.5 L1366.9 619.5 L1409.9 619.5 L1452.8 619.5 L1495.8 619.5 L1538.8 619.5 L1581.7 619.5 L1624.7 619.5 L1667.6 619.5 L1710.6 619.5 L1753.6 619.5 L1796.5 619.5 L1839.5 621.0" fill="none" stroke="#90ed7d" stroke-width="2" stroke-linejoin="round" stroke-linecap="round"/>
<path d="M765.5 615.5 L769.5 623.5 L761.5 623.5 Z" fill="#90ed7d"/>
<path d="M808.4 615.5 L812.4 623.5 L804.4 623.5 Z" fill="#90ed7d"/>
<path d="M851.4 615.5 L855.4 623.5 L847.4 623.5 Z" fill="#90ed7d"/>
<path d="M894.4 615.5 L898.4 623.5 L890.4 623.5 Z" fill="#90ed7d"/>
<path d="M937.3 615.5 L941.3 623.5 L933.3 623.5 Z" fill="#90ed7d"/>
<path d="M980.3 615.5 L984.3 623.5 L976.3 623.5 Z" fill="#90ed7d"/>
<path d="M1023.2 615.5 L1027.2 623.5 L1019.2 623.5 Z" fill="#90ed7d"/>
<path d="M1066.2 615.5 L1070.2 623.5 L1062.2 623.5 Z" fill="#90ed7d"/>
<path d="M1109.2 615.5 L1113.2 623.5 L1105.2 623.5 Z" fill="#90ed7d"/>
<path d="M1152.1 615.5 L1156.1 623.5 L1148.1 623.5 Z" fill="#90ed7d"/>
<path d="M1195.1 615.5 L1199.1 623.5 L1191.1 623.5 Z" fill="#90ed7d"/>
<path d="M1238.0 615.5 L1242.0 623.5 L1234.0 623.5 Z" fill="#90ed7d"/>
<path d="M1281.0 615.5 L1285.0 623.5 L1277.0 623.5 Z" fill="#90ed7d"/>
<path d="M1324.0 615.5 L1328.0 623.5 L1320.0 623.5 Z" fill="#90ed7d"/>
<path d="M1366.9 615.5 L1370.9 623.5 L1362.9 623.5 Z" fill="#90ed7d"/>
<path d="M1409.9 615.5 L1413.9 623.5 L1405.9 623.5 Z" fill="#90ed7d"/>
<path d="M1452.8 615.5 L1456.8 623.5 L1448.8 623.5 Z" fill="#90ed7d"/>
<path d="M1495.8 615.5 L1499.8 623.5 L1491.8 623.5 Z" fill="#90ed7d"/>
<path d="M1538.8 615.5 L1542.8 623.5 L1534.8 623.5 Z" fill="#90ed7d"/>
<path d="M1581.7 615.5 L1585.7 623.5 L1577.7 623.5 Z" fill="#90ed7d"/>
<path d="M1624.7 615.5 L1628.7 623.5 L1620.7 623.5 Z" fill="#90ed7d"/>
<path d="M1667.6 615.5 L1671.6 623.5 L1663.6 623.5 Z" fill="#90ed7d"/>
<path d="M1710.6 615.5 L1714.6 623.5 L1706.6 623.5 Z" fill="#90ed7d"/>
<path d="M1753.6 615.5 L1757.6 623.5 L1749.6 623.5 Z" fill="#90ed7d"/>
<path d="M1796.5 615.5 L1800.5 623.5 L1792.5 623.5 Z" fill="#90ed7d"/>
<path d="M1839.5 617.0 L1843.5 625.0 L1835.5 625.0 Z" fill="#90ed7d"/>
<path d="M765.5 616.5 L808.4 616.5 L851.4 616.5 L894.4 616.5 L937.3 616.5 L980.3 616.5 L1023.2 616.5 L1066.2 616.5 L1109.2 616.5 L1152.1 616.5 L1195.1 616.0 L1238.0 616.0 L1281.0 616.0 L1324.0 616.0 L1366.9 616.0 L1409.9 616.0 L1452.8 616.0 L1495.8 616.0 L1538.8 616.0 L1581.7 617.0 L1624.7 617.0 L1667.6 617.5 L1710.6 617.5 L1753.6 617.5 L1796.5 617.5 L1839.5 621.5" fill="none" stroke="#8085e9" stroke-width="2" stroke-linejoin="round" stroke-linecap="round"/>
<circle cx="765.5" cy="616.5" r="4" fill="#8085e9"/>
<circle cx="808.4" cy="616.5" r="4" fill="#8085e9"/>
<circle cx="851.4" cy="616.5" r="4" fill="#8085e9"/>
<circle cx="894.4" cy="616.5" r="4" fill="#8085e9"/>
<circle cx="937.3" cy="616.5" r="4" fill="#8085e9"/>
<circle cx="980.3" cy="616.5" r="4" fill="#8085e9"/>
<circle cx="1023.2" cy="616.5" r="4" fill="#8085e9"/>
<circle cx="1066.2" cy="616.5" r="4" fill="#8085e9"/>
<circle cx="1109.2" cy="616.5" r="4" fill="#8085e9"/>
<circle cx="1152.1" cy="616.5" r="4" fill="#8085e9"/>
<circle cx="1195.1" cy="616.0" r="4" fill="#8085e9"/>
<circle cx="1238.0" cy="616.0" r="4" fill="#8085e9"/>
<circle cx="1281.0" cy="616.0" r="4" fill="#8085e9"/>
<circle cx="1324.0" cy="616.0" r="4" fill="#8085e9"/>
<circle cx="1366.9" cy="616.0" r="4" fill="#8085e9"/>
<circle cx="1409.9" cy="616.0" r="4" fill="#8085e9"/>
<circle cx="1452.8" cy="616.0" r="4" fill="#8085e9"/>
<circle cx="1495.8" cy="616.0" r="4" fill="#8085e9"/>
<circle cx="1538.8" cy="616.0" r="4" fill="#8085e9"/>
<circle cx="1581.7" cy="617.0" r="4" fill="#8085e9"/>
<circle cx="1624.7" cy="617.0" r="4" fill="#8085e9"/>
<circle cx="1667.6" cy="617.5" r="4" fill="#8085e9"/>
<circle cx="1710.6" cy="617.5" r="4" fill="#8085e9"/>
<circle cx="1753.6" cy="617.5" r="4" fill="#8085e9"/>
<circle cx="1796.5" cy="617.5" r="4" fill="#8085e9"/>
<circle cx="1839.5" cy="621.5" r="4" fill="#8085e9"/>
<path d="M765.5 617.4 L808.4 617.4 L851.4 617.4 L894.4 617.4 L937.3 617.4 L980.3 617.4 L1023.2 617.4 L1066.2 617.4 L1109.2 617.4 L1152.1 617.4 L1195.1 617.4 L1238.0 617.4 L1281.0 617.4 L1324.0 617.4 L1366.9 617.4 L1409.9 617.4 L1452.8 617.4 L1495.8 617.4 L1538.8 617.4 L1581.7 617.4 L1624.7 617.4 L1667.6 617.4 L1710.6 617.4 L1753.6 617.4 L1796.5 617.4 L1839.5 622.0" fill="none" stroke="#f15c80" stroke-width="2" stroke-linejoin="round" stroke-linecap="round"/>
<path d="M765.5 613.4 L769.5 617.4 L765.5 621.4 L761.5 617.4 Z" fill="#f15c80"/>
<path d="M808.4 613.4 L812.4 617.4 L808.4 621.4 L804.4 617.4 Z" fill="#f15c80"/>
<path d="M851.4 613.4 L855.4 617.4 L851.4 621.4 L847.4 617.4 Z" fill="#f15c80"/>
<path d="M894.4 613.4 L898.4 617.4 L894.4 621.4 L890.4 617.4 Z" fill="#f15c80"/>
<path d="M937.3 613.4 L941.3 617.4 L937.3 621.4 L933.3 617.4 Z" fill="#f15c80"/>
<path d="M980.3 613.4 L984.3 617.4 L980.3 621.4 L976.3 617.4 Z" fill="#f15c80"/>
<path d="M1023.2 613.4 L1027.2 617.4 L1023.2 621.4 L1019.2 617.4 Z" fill="#f15c80"/>
<path d="M1066.2 613.4 L1070.2 617.4 L1066.2 621.4 L1062.2 617.4 Z" fill="#f15c80"/>
<path d="M1109.2 613.4 L1113.2 617.4 L1109.2 621.4 L1105.2 617.4 Z" fill="#f15c80"/>
<path d="M1152.1 613.4 L1156.1 617.4 L1152.1 621.4 L1148.1 617.4 Z" fill="#f15c80"/>
<path d="M1195.1 613.4 L1199.1 617.4 L1195.1 621.4 L1191.1 617.4 Z" fill="#f15c80"/>
<path d="M1238.0 613.4 L1242.0 617.4 L1238.0 621.4 L1234.0 617.4 Z" fill="#f15c80"/>
<path d="M1281.0 613.4 L1285.0 617.4 L1281.0 621.4 L1277.0 617.4 Z" fill="#f15c80"/>
<path d="M1324.0 613.4 L1328.0 617.4 L1324.0 621.4 L1320.0 617.4 Z" fill="#f15c80"/>
<path d="M1366.9 613.4 L1370.9 617.4 L1366.9 621.4 L1362.9 617.4 Z" fill="#f15c80"/>
<path d="M1409.9 613.4 L1413.9 617.4 L1409.9 621.4 L1405.9 617.4 Z" fill="#f15c80"/>
<path d="M1452.8 613.4 L1456.8 617.4 L1452.8 621.4 L1448.8 617.4 Z" fill="#f15c80"/>
<path d="M1495.8 613.4 L1499.8 617.4 L1495.8 621.4 L1491.8 617.4 Z" fill="#f15c80"/>
<path d="M1538.8 613.4 L1542.8 617.4 L1538.8 621.4 L1534.8 617.4 Z" fill="#f15c80"/>
<path d="M1581.7 613.4 L1585.7 617.4 L1581.7 621.4 L1577.7 617.4 Z" fill="#f15c80"/>
<path d="M1624.7 613.4 L1628.7 617.4 L1624.7 621.4 L1620.7 617.4 Z" fill="#f15c80"/>
<path d="M1667.6 613.4 L1671.6 617.4 L1667.6 621.4 L1663.6 617.4 Z" fill="#f15c80"/>
<path d="M1710.6 613.4 L1714.6 617.4 L1710.6 621.4 L1706.6 617.4 Z" fill="#f15c80"/>
<path d="M1753.6 613.4 L1757.6 617.4 L1753.6 621.4 L1749.6 617.4 Z" fill="#f15c80"/>
<path d="M1796.5 613.4 L1800.5 617.4 L1796.5 621.4 L1792.5 617.4 Z" fill="#f15c80"/>
<path d="M1839.5 618.0 L1843.5 622.0 L1839.5 626.0 L1835.5 622.0 Z" fill="#f15c80"/>
<path d="M765.5 617.5 L808.4 617.0 L851.4 617.5 L894.4 618.0 L937.3 618.5 L980.3 618.5 L1023.2 618.5 L1066.2 618.5 L1109.2 618.5 L1152.1 618.5 L1195.1 617.0 L1238.0 617.5 L1281.0 617.5 L1324.0 617.5 L1366.9 618.0 L1409.9 618.0 L1452.8 618.0 L1495.8 618.0 L1538.8 617.5 L1581.7 617.0 L1624.7 618.0 L1667.6 618.5 L1710.6 619.0 L1753.6 619.0 L1796.5 618.5 L1839.5 622.0" fill="none" stroke="#e4d354" stroke-width="2" stroke-linejoin="round" stroke-linecap="round"/>
<rect x="761.5" y="613.5" width="8" height="8" fill="#e4d354"/>
<rect x="804.4" y="613.0" width="8" height="8" fill="#e4d354"/>
<rect x="847.4" y="613.5" width="8" height="8" fill="#e4d354"/>
<rect x="890.4" y="614.0" width="8" height="8" fill="#e4d354"/>
<rect x="933.3" y="614.5" width="8" height="8" fill="#e4d354"/>
<rect x="976.3" y="614.5" width="8" height="8" fill="#e4d354"/>
<rect x="1019.2" y="614.5" width="8" height="8" fill="#e4d354"/>
<rect x="1062.2" y="614.5" width="8" height="8" fill="#e4d354"/>
<rect x="1105.2" y="614.5" width="8" height="8" fill="#e4d354"/>
<rect x="1148.1" y="614.5" width="8" height="8" fill="#e4d354"/>
<rect x="1191.1" y="613.0" width="8" height="8" fill="#e4d354"/>
<rect x="1234.0" y="613.5" width="8" height="8" fill="#e4d354"/>
<rect x="1277.0" y="613.5" width="8" height="8" fill="#e4d354"/>
<rect x="1320.0" y="613.5" width="8" height="8" fill="#e4d354"/>
<rect x="1362.9" y="614.0" width="8" height="8" fill="#e4d354"/>
<rect x="1405.9" y="614.0" width="8" height="8" fill="#e4d354"/>
<rect x="1448.8" y="614.0" width="8" height="8" fill="#e4d354"/>
<rect x="1491.8" y="614.0" width="8" height="8" fill="#e4d354"/>
<rect x="1534.8" y="613.5" width="8" height="8" fill="#e4d354"/>
<rect x="1577.7" y="613.0" width="8" height="8" fill="#e4d354"/>
<rect x="1620.7" y="614.0" width="8" height="8" fill="#e4d354"/>
<rect x="1663.6" y="614.5" width="8" height="8" fill="#e4d354"/>
<rect x="1706.6" y="615.0" width="8" height="8" fill="#e4d354"/>
<rect x="1749.6" y="615.0" width="8" height="8" fill="#e4d354"/>
<rect x="1792.5" y="614.5" width="8" height="8" fill="#e4d354"/>
<rect x="1835.5" y="618.0" width="8" height="8" fill="#e4d354"/>
<path d="M765.5 619.0 L808.4 619.0 L851.4 619.0 L894.4 619.0 L937.3 619.0 L980.3 619.0 L1023.2 619.0 L1066.2 619.0 L1109.2 619.0 L1152.1 619.0 L1195.1 619.0 L1238.0 619.0 L1281.0 619.0 L1324.0 619.0 L1366.9 619.0 L1409.9 619.0 L1452.8 619.0 L1495.8 619.0 L1538.8 619.0 L1581.7 618.0 L1624.7 619.0 L1667.6 619.0 L1710.6 619.0 L1753.6 619.5 L1796.5 619.0 L1839.5 622.0" fill="none" stroke="#2b908f" stroke-width="2" stroke-linejoin="round" stroke-linecap="round"/>
<path d="M765.5 615.0 L769.5 623.0 L761.5 623.0 Z" fill="#2b908f"/>
<path d="M808.4 615.0 L812.4 623.0 L804.4 623.0 Z" fill="#2b908f"/>
<path d="M851.4 615.0 L855.4 623.0 L847.4 623.0 Z" fill="#2b908f"/>
<path d="M894.4 615.0 L898.4 623.0 L890.4 623.0 Z" fill="#2b908f"/>
<path d="M937.3 615.0 L941.3 623.0 L933.3 623.0 Z" fill="#2b908f"/>
<path d="M980.3 615.0 L984.3 623.0 L976.3 623.0 Z" fill="#2b908f"/>
<path d="M1023.2 615.0 L1027.2 623.0 L1019.2 623.0 Z" fill="#2b908f"/>
<path d="M1066.2 615.0 L1070.2 623.0 L1062.2 623.0 Z" fill="#2b908f"/>
<path d="M1109.2 615.0 L1113.2 623.0 L1105.2 623.0 Z" fill="#2b908f"/>
<path d="M1152.1 615.0 L1156.1 623.0 L1148.1 623.0 Z" fill="#2b908f"/>
<path d="M1195.1 615.0 L1199.1 623.0 L1191.1 623.0 Z" fill="#2b908f"/>
<path d="M1238.0 615.0 L1242.0 623.0 L1234.0 623.0 Z" fill="#2b908f"/>
<path d="M1281.0 615.0 L1285.0 623.0 L1277.0 623.0 Z" fill="#2b908f"/>
<path d="M1324.0 615.0 L1328.0 623.0 L1320.0 623.0 Z" fill="#2b908f"/>
<path d="M1366.9 615.0 L1370.9 623.0 L1362.9 623.0 Z" fill="#2b908f"/>
<path d="M1409.9 615.0 L1413.9 623.0 L1405.9 623.0 Z" fill="#2b908f"/>
<path d="M1452.8 615.0 L1456.8 623.0 L1448.8 623.0 Z" fill="#2b908f"/>
<path d="M1495.8 615.0 L1499.8 623.0 L1491.8 623.0 Z" fill="#2b908f"/>
<path d="M1538.8 615.0 L1542.8 623.0 L1534.8 623.0 Z" fill="#2b908f"/>
<path d="M1581.7 614.0 L1585.7 622.0 L1577.7 622.0 Z" fill="#2b908f"/>
<path d="M1624.7 615.0 L1628.7 623.0 L1620.7 623.0 Z" fill="#2b908f"/>
<path d="M1667.6 615.0 L1671.6 623.0 L1663.6 623.0 Z" fill="#2b908f"/>
<path d="M1710.6 615.0 L1714.6 623.0 L1706.6 623.0 Z" fill="#2b908f"/>
<path d="M1753.6 615.5 L1757.6 623.5 L1749.6 623.5 Z" fill="#2b908f"/>
<path d="M1796.5 615.0 L1800.5 623.0 L1792.5 623.0 Z" fill="#2b908f"/>
<path d="M1839.5 618.0 L1843.5 626.0 L1835.5 626.0 Z" fill="#2b908f"/>
<path d="M765.5 618.5 L808.4 617.5 L851.4 618.0 L894.4 618.5 L937.3 619.0 L980.3 619.0 L1023.2 619.0 L1066.2 619.0 L1109.2 619.5 L1152.1 619.5 L1195.1 617.5 L1238.0 617.5 L1281.0 617.5 L1324.0 618.0 L1366.9 618.5 L1409.9 619.0 L1452.8 619.0 L1495.8 618.5 L1538.8 618.5 L1581.7 618.5 L1624.7 618.5 L1667.6 618.5 L1710.6 618.5 L1753.6 619.0 L1796.5 619.0 L1839.5 622.0" fill="none" stroke="#f45b5b" stroke-width="2" stroke-linejoin="round" stroke-linecap="round"/>
<path d="M761.5 614.5 L769.5 614.5 L765.5 622.5 Z" fill="#f45b5b"/>
<path d="M804.4 613.5 L812.4 613.5 L808.4 621.5 Z" fill="#f45b5b"/>
<path d="M847.4 614.0 L855.4 614.0 L851.4 622.0 Z" fill="#f45b5b"/>
<path d="M890.4 614.5 L898.4 614.5 L894.4 622.5 Z" fill="#f45b5b"/>
<path d="M933.3 615.0 L941.3 615.0 L937.3 623.0 Z" fill="#f45b5b"/>
<path d="M976.3 615.0 L984.3 615.0 L980.3 623.0 Z" fill="#f45b5b"/>
<path d="M1019.2 615.0 L1027.2 615.0 L1023.2 623.0 Z" fill="#f45b5b"/>
<path d="M1062.2 615.0 L1070.2 615.0 L1066.2 623.0 Z" fill="#f45b5b"/>
<path d="M1105.2 615.5 L1113.2 615.5 L1109.2 623.5 Z" fill="#f45b5b"/>
<path d="M1148.1 615.5 L1156.1 615.5 L1152.1 623.5 Z" fill="#f45b5b"/>
<path d="M1191.1 613.5 L1199.1 613.5 L1195.1 621.5 Z" fill="#f45b5b"/>
<path d="M1234.0 613.5 L1242.0 613.5 L1238.0 621.5 Z" fill="#f45b5b"/>
<path d="M1277.0 613.5 L1285.0 613.5 L1281.0 621.5 Z" fill="#f45b5b"/>
<path d="M1320.0 614.0 L1328.0 614.0 L1324.0 622.0 Z" fill="#f45b5b"/>
<path d="M1362.9 614.5 L1370.9 614.5 L1366.9 622.5 Z" fill="#f45b5b"/>
<path d="M1405.9 615.0 L1413.9 615.0 L1409.9 623.0 Z" fill="#f45b5b"/>
<path d="M1448.8 615.0 L1456.8 615.0 L1452.8 623.0 Z" fill="#f45b5b"/>
<path d="M1491.8 614.5 L1499.8 614.5 L1495.8 622.5 Z" fill="#f45b5b"/>
<path d="M1534.8 614.5 L1542.8 614.5 L1538.8 622.5 Z" fill="#f45b5b"/>
<path d="M1577.7 614.5 L1585.7 614.5 L1581.7 622.5 Z" fill="#f45b5b"/>
<path d="M1620.7 614.5 L1628.7 614.5 L1624.7 622.5 Z" fill="#f45b5b"/>
<path d="M1663.6 614.5 L1671.6 614.5 L1667.6 622.5 Z" fill="#f45b5b"/>
<path d="M1706.6 614.5 L1714.6 614.5 L1710.6 622.5 Z" fill="#f45b5b"/>
<path d="M1749.6 615.0 L1757.6 615.0 L1753.6 623.0 Z" fill="#f45b5b"/>
<path d="M1792.5 615.0 L1800.5 615.0 L1796.5 623.0 Z" fill="#f45b5b"/>
<path d="M1835.5 618.0 L1843.5 618.0 L1839.5 626.0 Z" fill="#f45b5b"/>
<path d="M765.5 613.6 L808.4 609.3 L851.4 609.3 L894.4 613.0 L937.3 614.8 L980.3 615.6 L1023.2 615.6 L1066.2 616.1 L1109.2 613.5 L1152.1 613.2 L1195.1 605.6 L1238.0 610.0 L1281.0 610.9 L1324.0 612.5 L1366.9 614.0 L1409.9 617.7 L1452.8 618.5 L1495.8 618.5 L1538.8 618.5 L1581.7 618.5 L1624.7 618.5 L1667.6 619.0 L1710.6 619.0 L1753.6 619.0 L1796.5 619.0 L1839.5 622.0" fill="none" stroke="#91e8e1" stroke-width="2" stroke-linejoin="round" stroke-linecap="round"/>
<circle cx="765.5" cy="613.6" r="4" fill="#91e8e1"/>
<circle cx="808.4" cy="609.3" r="4" fill="#91e8e1"/>
<circle cx="851.4" cy="609.3" r="4" fill="#91e8e1"/>
<circle cx="894.4" cy="613.0" r="4" fill="#91e8e1"/>
<circle cx="937.3" cy="614.8" r="4" fill="#91e8e1"/>
<circle cx="980.3" cy="615.6" r="4" fill="#91e8e1"/>
<circle cx="1023.2" cy="615.6" r="4" fill="#91e8e1"/>
<circle cx="1066.2" cy="616.1" r="4" fill="#91e8e1"/>
<circle cx="1109.2" cy="613.5" r="4" fill="#91e8e1"/>
<circle cx="1152.1" cy="613.2" r="4" fill="#91e8e1"/>
<circle cx="1195.1" cy="605.6" r="4" fill="#91e8e1"/>
<circle cx="1238.0" cy="610.0" r="4" fill="#91e8e1"/>
<circle cx="1281.0" cy="610.9" r="4" fill="#91e8e1"/>
<circle cx="1324.0" cy="612.5" r="4" fill="#91e8e1"/>
<circle cx="1366.9" cy="614.0" r="4" fill="#91e8e1"/>
<circle cx="1409.9" cy="617.7" r="4" fill="#91e8e1"/>
<circle cx="1452.8" cy="618.5" r="4" fill="#91e8e1"/>
<circle cx="1495.8" cy="618.5" r="4" fill="#91e8e1"/>
<circle cx="1538.8" cy="618.5" r="4" fill="#91e8e1"/>
<circle cx="1581.7" cy="618.5" r="4" fill="#91e8e1"/>
<circle cx="1624.7" cy="618.5" r="4" fill="#91e8e1"/>
<circle cx="1667.6" cy="619.0" r="4" fill="#91e8e1"/>
<circle cx="1710.6" cy="619.0" r="4" fill="#91e8e1"/>
<circle cx="1753.6" cy="619.0" r="4" fill="#91e8e1"/>
<circle cx="1796.5" cy="619.0" r="4" fill="#91e8e1"/>
<circle cx="1839.5" cy="622.0" r="4" fill="#91e8e1"/>
<path d="M1495.8 616.5 L1538.8 617.0 L1581.7 609.3 L1624.7 609.5 L1667.6 612.0 L1710.6 613.0 L1753.6 613.0 L1796.5 613.0 L1839.5 622.0" fill="none" stroke="#7cb5ec" stroke-width="2" stroke-linejoin="round" stroke-linecap="round"/>
<path d="M1495.8 612.5 L1499.8 616.5 L1495.8 620.5 L1491.8 616.5 Z" fill="#7cb5ec"/>
<path d="M1538.8 613.0 L1542.8 617.0 L1538.8 621.0 L1534.8 617.0 Z" fill="#7cb5ec"/>
<path d="M1581.7 605.3 L1585.7 609.3 L1581.7 613.3 L1577.7 609.3 Z" fill="#7cb5ec"/>
<path d="M1624.7 605.5 L1628.7 609.5 L1624.7 613.5 L1620.7 609.5 Z" fill="#7cb5ec"/>
<path d="M1667.6 608.0 L1671.6 612.0 L1667.6 616.0 L1663.6 612.0 Z" fill="#7cb5ec"/>
<path d="M1710.6 609.0 L1714.6 613.0 L1710.6 617.0 L1706.6 613.0 Z" fill="#7cb5ec"/>
<path d="M1753.6 609.0 L1757.6 613.0 L1753.6 617.0 L1749.6 613.0 Z" fill="#7cb5ec"/>
<path d="M1796.5 609.0 L1800.5 613.0 L1796.5 617.0 L1792.5 613.0 Z" fill="#7cb5ec"/>
<path d="M1839.5 618.0 L1843.5 622.0 L1839.5 626.0 L1835.5 622.0 Z" fill="#7cb5ec"/>
<path d="M1538.8 617.7 L1581.7 612.5 L1624.7 613.6 L1667.6 614.9 L1710.6 615.9 L1753.6 616.3 L1796.5 616.3 L1839.5 621.0" fill="none" stroke="#434348" stroke-width="2" stroke-linejoin="round" stroke-linecap="round"/>
<rect x="1534.8" y="613.7" width="8" height="8" fill="#434348"/>
<rect x="1577.7" y="608.5" width="8" height="8" fill="#434348"/>
<rect x="1620.7" y="609.6" width="8" height="8" fill="#434348"/>
<rect x="1663.6" y="610.9" width="8" height="8" fill="#434348"/>
<rect x="1706.6" y="611.9" width="8" height="8" fill="#434348"/>
<rect x="1749.6" y="612.3" width="8" height="8" fill="#434348"/>
<rect x="1792.5" y="612.3" width="8" height="8" fill="#434348"/>
<rect x="1835.5" y="617.0" width="8" height="8" fill="#434348"/>
<path d="M1796.5 620.0 L1839.5 620.0" fill="none" stroke="#f7a35c" stroke-width="2" stroke-linejoin="round" stroke-linecap="round"/>
<path d="M1792.5 616.0 L1800.5 616.0 L1796.5 624.0 Z" fill="#f7a35c"/>
<path d="M1835.5 616.0 L1843.5 616.0 L1839.5 624.0 Z" fill="#f7a35c"/>
<path d="M759.2 672.8 H775.2" stroke="#000" stroke-width="2"/>
<circle cx="767.2" cy="672.8" r="4" fill="#000"/>
<text x="780.2" y="677.1" font-family="Liberation Sans" font-size="12" font-weight="bold" fill="#333" letter-spacing="0.3">All on/off</text>
<path d="M861.1 672.8 H877.1" stroke="#7cb5ec" stroke-width="2"/>
<path d="M869.1 668.8 L873.1 672.8 L869.1 676.8 L865.1 672.8 Z" fill="#7cb5ec"/>
<text x="882.1" y="677.1" font-family="Liberation Sans" font-size="12" font-weight="bold" fill="#333" letter-spacing="0.3">IN</text>
<path d="M915.4 672.8 H931.4" stroke="#434348" stroke-width="2"/>
<rect x="919.4" y="668.8" width="8" height="8" fill="#434348"/>
<text x="936.4" y="677.1" font-family="Liberation Sans" font-size="12" font-weight="bold" fill="#333" letter-spacing="0.3">DE</text>
<path d="M974.5 672.8 H990.5" stroke="#90ed7d" stroke-width="2"/>
<path d="M982.5 668.8 L986.5 676.8 L978.5 676.8 Z" fill="#90ed7d"/>
<text x="995.5" y="677.1" font-family="Liberation Sans" font-size="12" font-weight="bold" fill="#333" letter-spacing="0.3">US</text>
<path d="M1032.9 672.8 H1048.9" stroke="#f7a35c" stroke-width="2"/>
<path d="M1036.9 668.8 L1044.9 668.8 L1040.9 676.8 Z" fill="#f7a35c"/>
<text x="1053.9" y="677.1" font-family="Liberation Sans" font-size="12" font-weight="bold" fill="#333" letter-spacing="0.3">PH</text>
<path d="M1090.1 672.8 H1106.1" stroke="#8085e9" stroke-width="2"/>
<circle cx="1098.1" cy="672.8" r="4" fill="#8085e9"/>
<text x="1111.1" y="677.1" font-family="Liberation Sans" font-size="12" font-weight="bold" fill="#333" letter-spacing="0.3">NL</text>
<path d="M1149.2 672.8 H1165.2" stroke="#f15c80" stroke-width="2"/>
<path d="M1157.2 668.8 L1161.2 672.8 L1157.2 676.8 L1153.2 672.8 Z" fill="#f15c80"/>
<text x="1170.2" y="677.1" font-family="Liberation Sans" font-size="12" font-weight="bold" fill="#333" letter-spacing="0.3">ES</text>
<path d="M1206.0 672.8 H1222.0" stroke="#e4d354" stroke-width="2"/>
<rect x="1210.0" y="668.8" width="8" height="8" fill="#e4d354"/>
<text x="1227.0" y="677.1" font-family="Liberation Sans" font-size="12" font-weight="bold" fill="#333" letter-spacing="0.3">PL</text>
<path d="M1262.0 672.8 H1278.0" stroke="#2b908f" stroke-width="2"/>
<path d="M1270.0 668.8 L1274.0 676.8 L1266.0 676.8 Z" fill="#2b908f"/>
<text x="1283.0" y="677.1" font-family="Liberation Sans" font-size="12" font-weight="bold" fill="#333" letter-spacing="0.3">CA</text>
<path d="M1322.3 672.8 H1338.3" stroke="#f45b5b" stroke-width="2"/>
<path d="M1326.3 668.8 L1334.3 668.8 L1330.3 676.8 Z" fill="#f45b5b"/>
<text x="1343.3" y="677.1" font-family="Liberation Sans" font-size="12" font-weight="bold" fill="#333" letter-spacing="0.3">SG</text>
<path d="M1379.7 672.8 H1395.7" stroke="#91e8e1" stroke-width="2"/>
<circle cx="1387.7" cy="672.8" r="4" fill="#91e8e1"/>
<text x="1400.7" y="677.1" font-family="Liberation Sans" font-size="12" font-weight="bold" fill="#333" letter-spacing="0.3">BR</text>
<path d="M1438.2 672.8 H1454.2" stroke="#7cb5ec" stroke-width="2"/>
<path d="M1446.2 668.8 L1450.2 672.8 L1446.2 676.8 L1442.2 672.8 Z" fill="#7cb5ec"/>
<text x="1459.2" y="677.1" font-family="Liberation Sans" font-size="12" font-weight="bold" fill="#333" letter-spacing="0.3">DZ</text>
<path d="M1496.9 672.8 H1512.9" stroke="#434348" stroke-width="2"/>
<rect x="1500.9" y="668.8" width="8" height="8" fill="#434348"/>
<text x="1517.9" y="677.1" font-family="Liberation Sans" font-size="12" font-weight="bold" fill="#333" letter-spacing="0.3">EG</text>
<path d="M1554.3 672.8 H1570.3" stroke="#90ed7d" stroke-width="2"/>
<path d="M1562.3 668.8 L1566.3 676.8 L1558.3 676.8 Z" fill="#90ed7d"/>
<text x="1575.3" y="677.1" font-family="Liberation Sans" font-size="12" font-weight="bold" fill="#333" letter-spacing="0.3">MX</text>
<path d="M1615.7 672.8 H1631.7" stroke="#f7a35c" stroke-width="2"/>
<path d="M1619.7 668.8 L1627.7 668.8 L1623.7 676.8 Z" fill="#f7a35c"/>
<text x="1636.7" y="677.1" font-family="Liberation Sans" font-size="12" font-weight="bold" fill="#333" letter-spacing="0.3">LK</text>
<path d="M1674.2 672.8 H1690.2" stroke="#cccccc" stroke-width="2"/>
<circle cx="1682.2" cy="672.8" r="4" fill="#cccccc"/>
<text x="1695.2" y="677.1" font-family="Liberation Sans" font-size="12" font-weight="bold" fill="#cccccc" letter-spacing="0.3">Other</text>
<path d="M1750.2 672.8 H1766.2" stroke="#cccccc" stroke-width="2"/>
<path d="M1758.2 668.8 L1762.2 672.8 L1758.2 676.8 L1754.2 672.8 Z" fill="#cccccc"/>
<text x="1771.2" y="677.1" font-family="Liberation Sans" font-size="12" font-weight="bold" fill="#cccccc" letter-spacing="0.3">Total</text>
<text x="1860.5" y="697.5" text-anchor="end" font-family="Liberation Sans" font-size="9.5" fill="#999">Highcharts.com</text>
</svg></div><!--/chart-->
<!-- TABLE -->
<div id="tbl" class="a" style="left:27px;top:302px;width:627px;height:381px;background:#fff;border:1px solid #cfcfcf"></div>
<div id="tlines"><div class="a" style="left:27px;top:329px;width:627px;height:1px;background:#cfcfcf"></div>
<div class="a" style="left:27px;top:356px;width:627px;height:2px;background:#cfcfcf"></div>
<div class="a" style="left:339px;top:302px;width:1px;height:381px;background:#cfcfcf"></div>
<div class="a" style="left:503px;top:329px;width:1px;height:354px;background:#cfcfcf"></div>
<div class="a" style="left:598px;top:329px;width:1px;height:354px;background:#cfcfcf"></div>
<div class="a" style="left:27px;top:384px;width:627px;height:1px;background:#cfcfcf"></div>
<div class="a" style="left:27px;top:411px;width:627px;height:1px;background:#cfcfcf"></div>
<div class="a" style="left:27px;top:438px;width:627px;height:1px;background:#cfcfcf"></div>
<div class="a" style="left:27px;top:465px;width:627px;height:1px;background:#cfcfcf"></div>
<div class="a" style="left:27px;top:492px;width:627px;height:1px;background:#cfcfcf"></div>
<div class="a" style="left:27px;top:519px;width:627px;height:1px;background:#cfcfcf"></div>
<div class="a" style="left:27px;top:546px;width:627px;height:1px;background:#cfcfcf"></div>
<div class="a" style="left:27px;top:573px;width:627px;height:1px;background:#cfcfcf"></div>
<div class="a" style="left:27px;top:600px;width:627px;height:1px;background:#cfcfcf"></div>
<div class="a" style="left:27px;top:627px;width:627px;height:2px;background:#cfcfcf"></div>
<div class="a" style="left:27px;top:655px;width:627px;height:1px;background:#cfcfcf"></div>
<div class="a" style="left:440px;top:357px;width:1px;height:299px;background:#cfcfcf"></div>
<div class="a" style="top:310px;font-size:12px;color:#000;font-weight:bold;left:83px;width:200px;text-align:center;">TOTAL</div>
<div class="a" style="top:310px;font-size:12px;color:#000;font-weight:bold;left:396px;width:200px;text-align:center;letter-spacing:0.8px;">2026-03-01 — 2026-03-26</div>
<div class="a" style="top:337px;font-size:12px;color:#000;font-weight:bold;left:321px;width:200px;text-align:center;letter-spacing:0.5px;">Volume</div>
<div class="a" style="top:337px;font-size:12px;color:#000;font-weight:bold;left:451px;width:200px;text-align:center;letter-spacing:0.5px;">Earn</div>
<div class="a" style="top:337px;font-size:12px;color:#000;font-weight:bold;left:526px;width:200px;text-align:center;letter-spacing:0.3px;">CPM</div>
<div class="a" style="top:365px;font-size:12px;color:#000;left:35px;">IN</div>
<div class="a" style="top:365px;font-size:12px;color:#000;left:232px;width:200px;text-align:right;">9,052,066</div>
<div class="a" style="top:365px;font-size:12px;color:#808080;left:296px;width:200px;text-align:right;">46.96%</div>
<div class="a" style="top:365px;font-size:12px;color:#000;left:391px;width:200px;text-align:right;">$3,765.07</div>
<div class="a" style="top:365px;font-size:12px;color:#000;left:526px;width:200px;text-align:center;">0.42</div>
<div class="a" style="top:392px;font-size:12px;color:#000;left:35px;">DE</div>
<div class="a" style="top:392px;font-size:12px;color:#000;left:232px;width:200px;text-align:right;">1,101,739</div>
<div class="a" style="top:392px;font-size:12px;color:#808080;left:296px;width:200px;text-align:right;">5.72%</div>
<div class="a" style="top:392px;font-size:12px;color:#000;left:391px;width:200px;text-align:right;">$1,076.71</div>
<div class="a" style="top:392px;font-size:12px;color:#000;left:526px;width:200px;text-align:center;">0.98</div>
<div class="a" style="top:419px;font-size:12px;color:#000;left:35px;">US</div>
<div class="a" style="top:419px;font-size:12px;color:#000;left:232px;width:200px;text-align:right;">992,366</div>
<div class="a" style="top:419px;font-size:12px;color:#808080;left:296px;width:200px;text-align:right;">5.15%</div>
<div class="a" style="top:419px;font-size:12px;color:#000;left:391px;width:200px;text-align:right;">$1,784.98</div>
<div class="a" style="top:419px;font-size:12px;color:#000;left:526px;width:200px;text-align:center;">1.80</div>
<div class="a" style="top:446px;font-size:12px;color:#000;left:35px;">PH</div>
<div class="a" style="top:446px;font-size:12px;color:#000;left:232px;width:200px;text-align:right;">766,540</div>
<div class="a" style="top:446px;font-size:12px;color:#808080;left:296px;width:200px;text-align:right;">3.98%</div>
<div class="a" style="top:446px;font-size:12px;color:#000;left:391px;width:200px;text-align:right;">$430.39</div>
<div class="a" style="top:446px;font-size:12px;color:#000;left:526px;width:200px;text-align:center;">0.56</div>
<div class="a" style="top:473px;font-size:12px;color:#000;left:35px;">BR</div>
<div class="a" style="top:473px;font-size:12px;color:#000;left:232px;width:200px;text-align:right;">418,481</div>
<div class="a" style="top:473px;font-size:12px;color:#808080;left:296px;width:200px;text-align:right;">2.17%</div>
<div class="a" style="top:473px;font-size:12px;color:#000;left:391px;width:200px;text-align:right;">$262.68</div>
<div class="a" style="top:473px;font-size:12px;color:#000;left:526px;width:200px;text-align:center;">0.63</div>
<div class="a" style="top:500px;font-size:12px;color:#000;left:35px;">NL</div>
<div class="a" style="top:500px;font-size:12px;color:#000;left:232px;width:200px;text-align:right;">391,444</div>
<div class="a" style="top:500px;font-size:12px;color:#808080;left:296px;width:200px;text-align:right;">2.03%</div>
<div class="a" style="top:500px;font-size:12px;color:#000;left:391px;width:200px;text-align:right;">$556.40</div>
<div class="a" style="top:500px;font-size:12px;color:#000;left:526px;width:200px;text-align:center;">1.42</div>
<div class="a" style="top:527px;font-size:12px;color:#000;left:35px;">ES</div>
<div class="a" style="top:527px;font-size:12px;color:#000;left:232px;width:200px;text-align:right;">372,544</div>
<div class="a" style="top:527px;font-size:12px;color:#808080;left:296px;width:200px;text-align:right;">1.93%</div>
<div class="a" style="top:527px;font-size:12px;color:#000;left:391px;width:200px;text-align:right;">$235.81</div>
<div class="a" style="top:527px;font-size:12px;color:#000;left:526px;width:200px;text-align:center;">0.63</div>
<div class="a" style="top:554px;font-size:12px;color:#000;left:35px;">PL</div>
<div class="a" style="top:554px;font-size:12px;color:#000;left:232px;width:200px;text-align:right;">340,775</div>
<div class="a" style="top:554px;font-size:12px;color:#808080;left:296px;width:200px;text-align:right;">1.77%</div>
<div class="a" style="top:554px;font-size:12px;color:#000;left:391px;width:200px;text-align:right;">$449.70</div>
<div class="a" style="top:554px;font-size:12px;color:#000;left:526px;width:200px;text-align:center;">1.32</div>
<div class="a" style="top:581px;font-size:12px;color:#000;left:35px;">DZ</div>
<div class="a" style="top:581px;font-size:12px;color:#000;left:232px;width:200px;text-align:right;">334,602</div>
<div class="a" style="top:581px;font-size:12px;color:#808080;left:296px;width:200px;text-align:right;">1.74%</div>
<div class="a" style="top:581px;font-size:12px;color:#000;left:391px;width:200px;text-align:right;">$248.59</div>
<div class="a" style="top:581px;font-size:12px;color:#000;left:526px;width:200px;text-align:center;">0.74</div>
<div class="a" style="top:608px;font-size:12px;color:#000;left:35px;">CA</div>
<div class="a" style="top:608px;font-size:12px;color:#000;left:232px;width:200px;text-align:right;">317,742</div>
<div class="a" style="top:608px;font-size:12px;color:#808080;left:296px;width:200px;text-align:right;">1.65%</div>
<div class="a" style="top:608px;font-size:12px;color:#000;left:391px;width:200px;text-align:right;">$426.44</div>
<div class="a" style="top:608px;font-size:12px;color:#000;left:526px;width:200px;text-align:center;">1.34</div>
<div class="a" style="top:636px;font-size:12px;color:#000;font-weight:bold;left:35px;letter-spacing:0.4px;">Other</div>
<div class="a" style="top:636px;font-size:12px;color:#000;font-weight:bold;left:232px;width:200px;text-align:right;letter-spacing:0.6px;">5,188,183</div>
<div class="a" style="top:636px;font-size:12px;color:#808080;font-weight:bold;left:296px;width:200px;text-align:right;letter-spacing:0.6px;">26.91%</div>
<div class="a" style="top:636px;font-size:12px;color:#000;font-weight:bold;left:391px;width:200px;text-align:right;letter-spacing:0.6px;">$5,501.67</div>
<div class="a" style="top:636px;font-size:12px;color:#000;font-weight:bold;left:526px;width:200px;text-align:center;letter-spacing:0.6px;">1.06</div>
<div class="a" style="top:663px;font-size:12px;color:#000;font-weight:bold;left:35px;letter-spacing:0.4px;">Total</div>
<div class="a" style="top:663px;font-size:12px;color:#000;font-weight:bold;left:296px;width:200px;text-align:right;letter-spacing:0.6px;">19,276,482</div>
<div class="a" style="top:663px;font-size:12px;color:#000;font-weight:bold;left:391px;width:200px;text-align:right;letter-spacing:0.6px;">$14,738.43</div>
<div class="a" style="top:663px;font-size:12px;color:#000;font-weight:bold;left:526px;width:200px;text-align:center;letter-spacing:0.6px;">0.77</div></div><!--/tlines-->
<div class="a" style="left:1791px;top:235px;width:75px;height:21px;background:#efefef;border:1px solid #767676;border-radius:2px;font-size:13.3px;color:#000;text-align:center;line-height:19px">Reset</div>
</body></html>
